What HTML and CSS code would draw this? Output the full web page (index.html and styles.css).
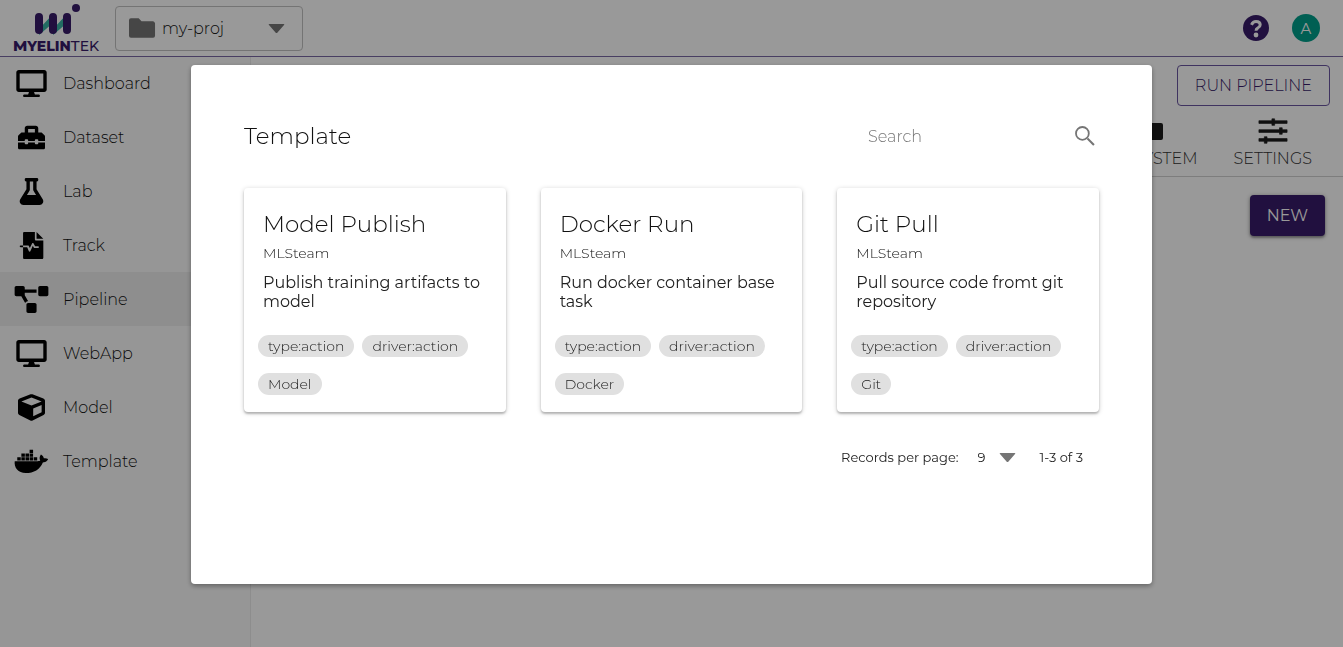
FILE: index.html
```html
<!DOCTYPE html>
<html lang="en">
<head>
<meta charset="utf-8">
<meta name="viewport" content="width=device-width, initial-scale=1">
<title>MyelinTek - Pipeline</title>
<link rel="stylesheet" href="styles.css">
</head>
<body>
<svg class="sprite" aria-hidden="true">
  <symbol id="i-desktop" viewBox="0 0 576 512"><path d="M528 0H48C21 0 0 21 0 48v320c0 27 21 48 48 48h192l-16 48h-72c-13 0-24 11-24 24s11 24 24 24h272c13 0 24-11 24-24s-11-24-24-24h-72l-16-48h192c27 0 48-21 48-48V48c0-27-21-48-48-48zm-16 352H64V64h448v288z"/></symbol>
  <symbol id="i-toolbox" viewBox="0 0 512 512"><path d="M502 214l-45-45c-6-6-14-9-23-9h-50V80c0-27-21-48-48-48H176c-27 0-48 21-48 48v80H78c-9 0-17 3-23 9l-45 45c-6 6-10 14-10 23v83h128v-16c0-9 7-16 16-16h32c9 0 16 7 16 16v16h128v-16c0-9 7-16 16-16h32c9 0 16 7 16 16v16h128v-83c0-9-4-17-10-23zM320 160H192V96h128v64zm64 208c0 9-7 16-16 16h-32c-9 0-16-7-16-16v-16H192v16c0 9-7 16-16 16h-32c-9 0-16-7-16-16v-16H0v96c0 18 14 32 32 32h448c18 0 32-14 32-32v-96H384v16z"/></symbol>
  <symbol id="i-flask" viewBox="0 0 448 512"><path d="M437 403L320 215V64h8c13 0 24-11 24-24V24c0-13-11-24-24-24H120C107 0 96 11 96 24v16c0 13 11 24 24 24h8v151L11 403c-29 47 5 109 60 109h306c55 0 89-61 60-109zM138 320l48-77c4-6 6-12 6-19V64h64v160c0 8 2 14 6 19l48 77H138z"/></symbol>
  <symbol id="i-track" viewBox="0 0 512 512"><path d="M352 0v128h128zM320 0H120C106 0 96 10 96 24v232h96c5 0 9 2 11 7l21 41 43-87c6-11 22-11 28 0l30 55h59c7 0 12 7 12 16s-5 16-12 16h-70c-5 0-10-2-13-7l-20-34-47 101c-6 12-22 12-28 0l-32-76H96v200c0 14 10 24 24 24h336c14 0 24-10 24-24V160H344c-14 0-24-10-24-24V0zM48 256h48v32H48c-21 0-21-32 0-32z"/></symbol>
  <symbol id="i-pipeline" viewBox="0 0 640 512"><path d="M384 320H256c-18 0-32 14-32 32v128c0 18 14 32 32 32h128c18 0 32-14 32-32V352c0-18-14-32-32-32zM192 32c0-18-14-32-32-32H32C14 0 0 14 0 32v128c0 18 14 32 32 32h95l73 128c11-19 32-32 56-32h1l-65-113V128h224V64H192V32zM608 0H480c-18 0-32 14-32 32v128c0 18 14 32 32 32h128c18 0 32-14 32-32V32c0-18-14-32-32-32z"/></symbol>
  <symbol id="i-cube" viewBox="0 0 512 512"><path d="M239 6L31 84C12 91 0 109 0 129v225c0 18 10 35 26 43l208 104c14 7 29 7 43 0l208-104c16-8 27-25 27-43V129c0-20-13-38-31-45L273 6c-11-4-23-4-34 0zM256 68l192 72v1l-192 78-192-78v-1l192-72zm32 356V275l160-65v134l-160 80z"/></symbol>
  <symbol id="i-docker" viewBox="0 0 640 512"><path d="M350 237h-66v-60h66v60zm0-204h-66v61h66V33zm78 144h-66v60h66v-60zm-156-72h-66v61h66v-61zm78 0h-66v61h66v-61zm277 100c-14-10-47-14-73-9-3-24-17-45-41-63l-14-9-9 14c-18 27-23 72-4 101-8 5-25 11-47 11H2c-8 50 6 115 44 160 37 43 92 65 164 65 156 0 271-72 325-202 21 0 67 0 91-45 1-2 6-13 8-17l-13-7zM116 177H50v60h66v-60zm78 0h-66v60h66v-60zm78 0h-66v60h66v-60zm-78-72h-66v61h66v-61z"/></symbol>
  <symbol id="i-folder" viewBox="0 0 28 20"><path d="M2 0h8l3 3h12a3 3 0 0 1 2 2v13a2 2 0 0 1-2 2H2a2 2 0 0 1-2-2V2a2 2 0 0 1 2-2z"/></symbol>
  <symbol id="i-folder-wide" viewBox="0 0 34 26"><path d="M2 2h10l3 3h17a2 2 0 0 1 2 2v13a2 2 0 0 1-2 2H2a2 2 0 0 1-2-2V4a2 2 0 0 1 2-2z"/></symbol>
  <symbol id="i-caret" viewBox="0 0 16 9"><path d="M1 0h14q1.500 0 .5 1L9 8.500q-1 1-2 0L.5 1Q-.5 0 1 0z"/></symbol>
  <symbol id="i-sliders" viewBox="0 0 28 24"><path d="M1 2.500h26v2.500H1zM1 10.800h26v2.500H1zM1 19h26v2.500H1zM13 .8h2.500v6H13zM20 9h2.500v6H20zM6 17.300h2.500v6H6z" stroke="currentColor" stroke-width=".6" stroke-linejoin="round"/></symbol>
  <symbol id="i-search" viewBox="0 0 20 20"><circle cx="7.400" cy="7.400" r="6.400" fill="none" stroke="currentColor" stroke-width="1.800"/><path d="M11.800 13.200l1.400-1.400 6.500 6.400-1.500 1.500z"/></symbol>
</svg>

<div class="page">
  <header class="topbar">
    <a class="logo" href="#" aria-label="MyelinTek">
      <svg class="logo-mark" viewBox="0 0 48 34" aria-hidden="true">
        <path class="logo-teal" d="M5 26L19 11v9L5 32zM19 26L33 11v9L19 32z"/>
        <path class="logo-bars" d="M5 14v13M19 14v13M33 14v13"/>
        <circle class="logo-dot" cx="42" cy="5" r="4"/>
      </svg>
      <span class="logo-name"><b><big>M</big>YELIN</b><big>T</big>EK</span>
    </a>
    <label class="project">
      <svg class="project-folder"><use href="#i-folder"/></svg>
      <select class="project-select" aria-label="Project"><option>my-proj</option></select>
      <svg class="caret"><use href="#i-caret"/></svg>
    </label>
    <div class="topbar-actions">
      <button class="help" aria-label="Help">
        <svg viewBox="0 0 26 26"><circle cx="13" cy="13" r="13"/><path class="help-hook" d="M8.500 9.800Q10 6.500 13 6.500q4.200 0 4.200 3.300 0 1.800-2.200 3-2 1-2 3"/><circle class="help-point" cx="13" cy="20" r="2.400"/></svg>
      </button>
      <button class="avatar">A</button>
    </div>
  </header>

  <div class="body">
    <nav class="sidebar">
      <a class="nav-item" href="#"><svg class="nav-icon"><use href="#i-desktop"/></svg>Dashboard</a>
      <a class="nav-item" href="#"><svg class="nav-icon"><use href="#i-toolbox"/></svg>Dataset</a>
      <a class="nav-item" href="#"><svg class="nav-icon"><use href="#i-flask"/></svg>Lab</a>
      <a class="nav-item" href="#"><svg class="nav-icon"><use href="#i-track"/></svg>Track</a>
      <a class="nav-item nav-item-active" href="#"><svg class="nav-icon"><use href="#i-pipeline"/></svg>Pipeline</a>
      <a class="nav-item" href="#"><svg class="nav-icon"><use href="#i-desktop"/></svg>WebApp</a>
      <a class="nav-item" href="#"><svg class="nav-icon"><use href="#i-cube"/></svg>Model</a>
      <a class="nav-item" href="#"><svg class="nav-icon"><use href="#i-docker"/></svg>Template</a>
    </nav>
    <main class="content">
      <div class="run-row"><button class="btn-outline">RUN PIPELINE</button></div>
      <div class="tabs">
        <a class="tab" href="#"><svg class="tab-icon"><use href="#i-folder-wide"/></svg>FILE SYSTEM</a>
        <a class="tab" href="#"><svg class="tab-icon"><use href="#i-sliders"/></svg>SETTINGS</a>
      </div>
      <div class="new-row"><button class="btn-solid">NEW</button></div>
    </main>
  </div>
</div>

<div class="backdrop">
  <section class="dialog" role="dialog" aria-labelledby="dialog-title">
    <div class="dialog-head">
      <h1 class="dialog-title" id="dialog-title">Template</h1>
      <label class="search">
        <input class="search-input" type="text" placeholder="Search" aria-label="Search">
        <svg class="search-icon"><use href="#i-search"/></svg>
      </label>
    </div>
    <div class="cards">
      <article class="card">
        <h2 class="card-title">Model Publish</h2>
        <p class="card-owner">MLSteam</p>
        <p class="card-text">Publish training artifacts to model</p>
        <div class="tags"><span class="tag">type:action</span><span class="tag">driver:action</span><span class="tag">Model</span></div>
      </article>
      <article class="card">
        <h2 class="card-title">Docker Run</h2>
        <p class="card-owner">MLSteam</p>
        <p class="card-text">Run docker container base task</p>
        <div class="tags"><span class="tag">type:action</span><span class="tag">driver:action</span><span class="tag">Docker</span></div>
      </article>
      <article class="card">
        <h2 class="card-title">Git Pull</h2>
        <p class="card-owner">MLSteam</p>
        <p class="card-text">Pull source code fromt git repository</p>
        <div class="tags"><span class="tag">type:action</span><span class="tag">driver:action</span><span class="tag">Git</span></div>
      </article>
    </div>
    <div class="pager">
      <label for="per-page">Records per page:</label>
      <span class="pager-size">
        <select class="pager-select" id="per-page"><option>9</option></select>
        <svg class="caret"><use href="#i-caret"/></svg>
      </span>
      <span>1-3 of 3</span>
    </div>
  </section>
</div>
</body>
</html>
```
FILE: styles.css
```css
* { box-sizing: border-box; }

:root {
  --purple: #371c69;
  --teal: #009e8a;
}

body {
  margin: 0;
  font-family: Montserrat, Inter, "Open Sans", sans-serif;
  font-size: 16px;
  font-weight: 300;
  color: #111;
  background: #fff;
}

a { color: inherit; text-decoration: none; }
h1, h2, p { margin: 0; font-weight: 300; }
svg { display: block; fill: currentColor; flex: none; }
button, input, select { font: inherit; color: inherit; cursor: pointer; }
select { appearance: none; border: 0; padding: 0; background: none; }

.sprite { position: absolute; width: 0; height: 0; }
.caret { width: 17px; height: 9px; color: #757575; pointer-events: none; }

.page { display: flex; flex-direction: column; min-height: 100vh; }

.topbar {
  display: flex;
  align-items: center;
  height: 56px;
  padding: 0 23px 0 13px;
  box-shadow: 0 1px 0 #7868a4;
  z-index: 1;
}

.logo { display: flex; flex-direction: column; width: 86px; align-items: center; color: var(--purple); }
.logo-mark { width: 48px; height: 34px; margin: 2px 0 0 4px; }
.logo-teal { fill: #39b5a5; }
.logo-bars { stroke: var(--purple); stroke-width: 8px; stroke-linecap: round; }
.logo-name { font-size: 14px; font-weight: 500; line-height: 18px; white-space: nowrap; }
.logo-name b { font-weight: 800; }
.logo-name big { font-size: 15px; }

.project {
  display: flex;
  align-items: center;
  width: 188px;
  height: 45px;
  margin-left: 16px;
  padding: 0 17px 0 13px;
  border: 1px solid #c2c2c2;
  border-radius: 4px;
}
.project-folder { width: 27px; height: 20px; margin-right: 6px; color: #757575; }
.project-select { flex: 1; min-width: 0; }

.topbar-actions { display: flex; gap: 23px; align-items: center; margin-left: auto; }
.help { width: 26px; height: 26px; padding: 0; border: 0; background: none; color: var(--purple); }
.help-hook { fill: none; stroke: #fff; stroke-width: 3px; }
.help-point { fill: #fff; }
.avatar {
  width: 28px;
  height: 28px;
  padding: 0;
  border: 0;
  border-radius: 50%;
  background: var(--teal);
  color: #fff;
  font-size: 15px;
  font-weight: 400;
}

.body { display: flex; flex: 1; }
.sidebar { width: 251px; border-right: 1px solid #ebebeb; background: #fafafa; }
.nav-item { display: flex; align-items: center; gap: 14px; height: 54px; padding-left: 14px; }
.nav-item-active { background: #ededed; }
.nav-icon { width: 35px; height: 27px; color: #000; }

.content { flex: 1; }
.run-row { display: flex; justify-content: flex-end; padding: 9px 13px 0; }
.btn-outline {
  height: 41px;
  padding: 0 17px;
  border: 1px solid #6a55a0;
  border-radius: 4px;
  background: none;
  color: var(--purple);
}
.tabs {
  display: flex;
  justify-content: flex-end;
  gap: 36px;
  height: 71px;
  padding: 12px 31px 0 0;
  border-bottom: 1px solid #d0d0d0;
}
.tab { display: flex; flex-direction: column; align-items: center; gap: 5px; line-height: 20px; color: #333; }
.tab-icon { width: 34px; height: 26px; color: #1d1d1d; }
.new-row { display: flex; justify-content: flex-end; padding: 18px 18px 0; }
.btn-solid {
  height: 41px;
  padding: 0 17px;
  border: 0;
  border-radius: 4px;
  background: var(--purple);
  color: #fff;
  font-weight: 400;
  box-shadow: 0 1px 4px rgba(0, 0, 0, .4), 0 2px 2px rgba(0, 0, 0, .2);
}

.backdrop {
  position: fixed;
  inset: 0;
  z-index: 2;
  display: flex;
  align-items: center;
  justify-content: center;
  padding: 2px 191px 0;
  background: rgba(0, 0, 0, .4);
}
.dialog {
  width: 100%;
  min-height: calc(100vh - 128px);
  padding: 53px;
  border-radius: 4px;
  background: #fff;
  box-shadow: 0 2px 5px rgba(0, 0, 0, .35);
}
.dialog-head { display: flex; align-items: center; justify-content: space-between; height: 36px; margin-bottom: 34px; }
.dialog-title { font-size: 23px; line-height: 36px; }
.search { display: flex; align-items: center; width: 231px; padding-right: 4px; }
.search-input { flex: 1; min-width: 0; padding: 0; border: 0; outline: 0; }
.search-input::placeholder { color: #757575; opacity: 1; }
.search-icon { width: 20px; height: 20px; color: #757575; }

.cards { display: grid; grid-template-columns: repeat(3, 1fr); gap: 35px; }
.card {
  padding: 18px 14px 17px;
  border-radius: 4px;
  box-shadow: 0 1px 5px rgba(0, 0, 0, .2), 0 2px 2px rgba(0, 0, 0, .2);
}
.card-title { padding: 0 5px; font-size: 23px; line-height: 36px; }
.card-owner { padding: 0 5px; font-size: 14px; line-height: 22px; }
.card-text { margin-top: 9px; padding: 0 5px; color: #212121; font-weight: 400; line-height: 19px; }
.tags { display: flex; flex-wrap: wrap; gap: 16px 8px; margin-top: 24px; }
.tag {
  padding: 0 10px;
  border-radius: 11px;
  background: #e0e0e0;
  color: #212121;
  font-size: 14px;
  line-height: 22px;
}

.pager {
  display: flex;
  justify-content: flex-end;
  align-items: center;
  margin-top: 35px;
  padding-right: 16px;
  color: #212121;
  font-size: 13px;
  font-weight: 400;
  line-height: 20px;
}
.pager-size { display: flex; align-items: center; gap: 13px; margin: 0 24px 0 19px; }
```
